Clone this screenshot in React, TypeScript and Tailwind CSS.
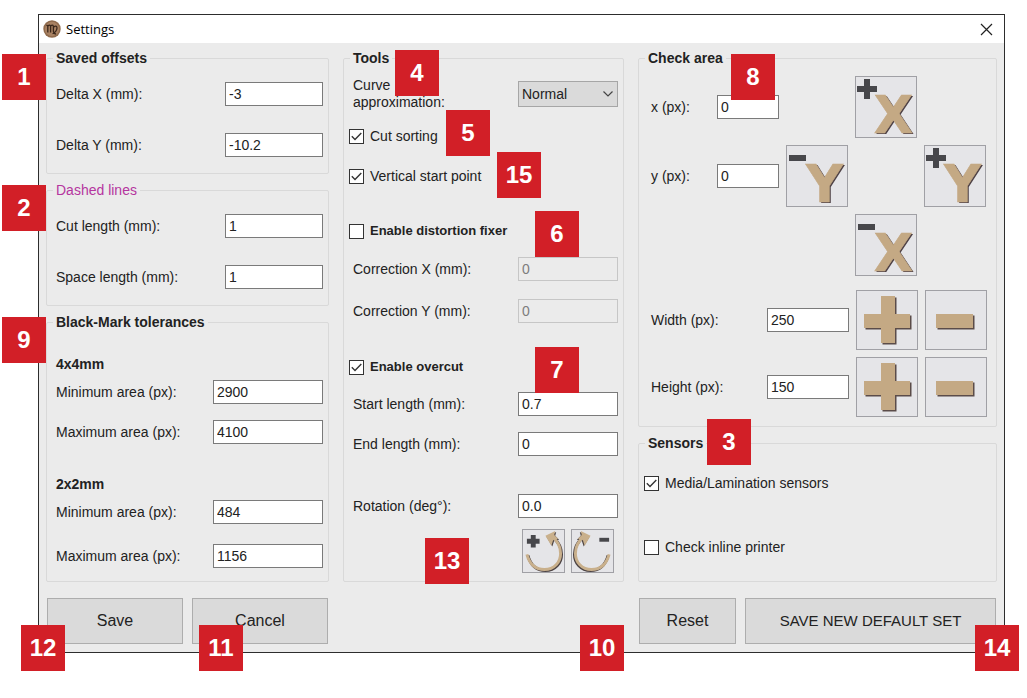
import { ReactNode, useId } from "react";
import clsx from "clsx";

// numbered red marker that sits over the dialog
function Marker({ n, className }: { n: number; className: string }) {
    return (
        <span
            className={clsx(
                "absolute z-10 flex h-[46px] w-11 items-center justify-center bg-[#d21f27] text-2xl font-bold text-white",
                className
            )}
        >
            {n}
        </span>
    );
}

type GroupProps = {
    title: string;
    legendClass?: string;
    className?: string;
    markers?: ReactNode;
    children: ReactNode;
};

function Group({ title, legendClass = "font-bold", className, markers, children }: GroupProps) {
    return (
        <div className={clsx("relative flex flex-col", className)}>
            {markers}
            <fieldset className="min-w-0 flex-1 rounded-xs border border-[#d9d9d9]">
                <legend className={clsx("ml-1.5 px-[3px] leading-4", legendClass)}>{title}</legend>
                {children}
            </fieldset>
        </div>
    );
}

const inputClass =
    "h-6 border border-[#7a7a7a] bg-white pl-[3px] text-[#222] outline-none disabled:border-[#c6c6c6] disabled:bg-[#ebebeb] disabled:text-[#7d7d7d]";

type FieldProps = {
    label: string;
    value: string;
    inputWidth: string;
    className?: string;
    disabled?: boolean;
};

function Field({ label, value, inputWidth, className, disabled }: FieldProps) {
    const id = useId();
    return (
        <div className={clsx("flex items-center justify-between pr-[5px] pl-[9px]", className)}>
            <label htmlFor={id}>{label}</label>
            <input
                id={id}
                type="text"
                defaultValue={value}
                disabled={disabled}
                className={clsx(inputClass, inputWidth)}
            />
        </div>
    );
}

type CheckProps = { label: string; checked?: boolean; className?: string };

function Check({ label, checked, className }: CheckProps) {
    return (
        <label className={clsx("flex h-4 items-center gap-1.5 pl-[5px]", className)}>
            <span className="grid">
                <input
                    type="checkbox"
                    defaultChecked={checked}
                    className="peer col-start-1 row-start-1 size-[15px] appearance-none border border-[#333] bg-white"
                />
                <svg
                    viewBox="0 0 15 15"
                    className="pointer-events-none invisible col-start-1 row-start-1 size-[15px] peer-checked:visible"
                    fill="none"
                    stroke="#333"
                    strokeWidth="1.4"
                >
                    <path d="M2.8 7.3 6 10.4 12.3 4" />
                </svg>
            </span>
            {label}
        </label>
    );
}

const toolButton = "flex items-center justify-center border border-[#a0a0a5] bg-[#e5e5e8]";

function AxisButton({ axis, sign, className }: { axis: string; sign: "+" | "-"; className: string }) {
    return (
        <button
            type="button"
            aria-label={`Move ${sign}${axis}`}
            className={clsx(toolButton, "h-[62px]", className)}
        >
            <svg
                width="60"
                height="60"
                viewBox="1 1 60 60"
                className="overflow-visible font-['DejaVu_Sans',sans-serif]"
            >
                <g fill="#47474b">
                    <rect x={sign === "+" ? 2 : 3} y="10" width={sign === "+" ? 20 : 17} height="6" />
                    {sign === "+" && <rect x="9" y="3" width="6" height="20" />}
                </g>
                <g fontSize="51" fontWeight="bold" textAnchor="middle">
                    <text x="40" y="58" fill="#4f4246">
                        {axis}
                    </text>
                    <text x="38.500" y="57" fill="#c4a984" stroke="#c4a984" strokeWidth=".6">
                        {axis}
                    </text>
                </g>
            </svg>
        </button>
    );
}

const PLUS = "M25 6h14v18h15v14H39v15H25V38H8V24h17z";
const MINUS = "M11 24h37v14H11z";

function SizeButton({ label, shape }: { label: string; shape: string }) {
    return (
        <button type="button" aria-label={label} className={clsx(toolButton, "h-[60px]")}>
            <svg width="60" height="58" viewBox="1 1 60 58">
                <path d={shape} fill="#5b4c49" transform="translate(1.5 1.5)" />
                <path d={shape} fill="#c4a984" />
            </svg>
        </button>
    );
}

function RotateArrow() {
    const head = "M24 7 34 2 33 6 37 10 32 11 30 17z";
    const arc = "M5 26C8 37 15 41.500 23 41.500C33 41.500 39.500 34 39.500 25C39.500 17 36 12 31 8";
    return (
        <>
            <g stroke="#4d4444" transform="translate(1 1)" fill="none">
                <path d={arc} strokeWidth="3" />
                <path d={head} fill="#4d4444" stroke="none" />
            </g>
            <path d={arc} stroke="#c9b08c" strokeWidth="3" fill="none" />
            <path d={head} fill="#c9b08c" />
        </>
    );
}

function RotateButton({ sign }: { sign: "+" | "-" }) {
    return (
        <button type="button" aria-label={`Rotate ${sign}`} className={clsx(toolButton, "h-11 w-[43px]")}>
            <svg width="41" height="42" viewBox="1 1 42 43">
                {sign === "+" ? (
                    <>
                        <RotateArrow />
                        <path d="M9 6h5v4h4v5h-4v4H9v-4H5v-5h4z" fill="#47474b" />
                    </>
                ) : (
                    <>
                        <g transform="translate(44 0) scale(-1 1)">
                            <RotateArrow />
                        </g>
                        <path d="M29 9h10v4H29z" fill="#47474b" />
                    </>
                )}
            </svg>
        </button>
    );
}

function AppIcon() {
    return (
        <svg width="18" height="18" viewBox="0 0 18 18" fill="none">
            <circle cx="9" cy="9" r="8.700" fill="#8f6a4c" />
            <circle cx="9" cy="9" r="7.200" fill="#a98263" />
            <path
                d="M3.500 5 4.800 6v6.500M4.800 6.200Q6.800 4.200 7.600 6.200v6.300M7.600 6.200Q9.600 4.200 10.400 6.200v5.300Q10.600 13.500 13 14.200M10.500 7.200Q13.800 4.800 14 8 13.800 11.500 9.600 13.800"
                stroke="#3a271b"
                strokeWidth="1.300"
            />
        </svg>
    );
}

const bigButton = "h-[46px] w-full border border-[#adadad] bg-[#dadada] text-[#222]";

export default function App() {
    return (
        <div className="min-h-screen bg-white pt-3.5 pr-[22px] pb-11 pl-[38px] font-['Liberation_Sans',Arial,sans-serif] text-sm text-[#222]">
            <main className="border border-[#2d2d2d] bg-[#ebebeb]">
                {/* title bar */}
                <header className="flex h-7 items-center gap-[5px] bg-white pr-[11px] pl-1">
                    <AppIcon />
                    <h1 className="flex-1 font-['Open_Sans','Noto_Sans',sans-serif] text-[13px] text-black">
                        Settings
                    </h1>
                    <button type="button" aria-label="Close">
                        <svg width="13" height="13" viewBox="0 0 13 13" stroke="#222" strokeWidth="1.200">
                            <path d="m1 1 11 11M12 1 1 12" />
                        </svg>
                    </button>
                </header>

                <div className="grid grid-cols-[283fr_281fr_359fr] gap-x-3.5 gap-y-4 px-[7px] pt-[7px] pb-2">
                    <div className="flex flex-col gap-2">
                        <Group title="Saved offsets" markers={<Marker n={1} className="top-1 -left-11" />}>
                            <Field label="Delta X (mm):" value="-3" inputWidth="w-[98px]" className="mt-4" />
                            <Field label="Delta Y (mm):" value="-10.2" inputWidth="w-[98px]" className="mt-[27px] mb-4" />
                        </Group>
                        <Group
                            title="Dashed lines"
                            legendClass="text-[#b5359f]"
                            markers={<Marker n={2} className="top-[3px] -left-11" />}
                        >
                            <Field label="Cut length (mm):" value="1" inputWidth="w-[98px]" className="mt-4" />
                            <Field label="Space length (mm):" value="1" inputWidth="w-[98px]" className="mt-[27px] mb-4" />
                        </Group>
                        <Group
                            title="Black-Mark tolerances"
                            className="flex-1"
                            markers={<Marker n={9} className="top-[3px] -left-11" />}
                        >
                            <h2 className="mt-[26px] mb-2 pl-[9px] leading-4 font-bold">4x4mm</h2>
                            <Field label="Minimum area (px):" value="2900" inputWidth="w-[110px]" />
                            <Field label="Maximum area (px):" value="4100" inputWidth="w-[110px]" className="mt-4" />
                            <h2 className="mt-8 mb-2 pl-[9px] leading-4 font-bold">2x2mm</h2>
                            <Field label="Minimum area (px):" value="484" inputWidth="w-[110px]" />
                            <Field label="Maximum area (px):" value="1156" inputWidth="w-[110px]" className="mt-5" />
                        </Group>
                    </div>

                    <Group
                        title="Tools"
                        markers={
                            <>
                                <Marker n={4} className="top-0 left-[52px]" />
                                <Marker n={5} className="top-[60px] left-[103px]" />
                                <Marker n={15} className="top-[102px] left-[154px]" />
                                <Marker n={6} className="top-[161px] left-48" />
                                <Marker n={7} className="top-[297px] left-48" />
                                <Marker n={13} className="top-[488px] left-[82px]" />
                            </>
                        }
                    >
                        <div className="mt-[11px] flex h-[34px] items-center justify-between pr-[5px] pl-[9px]">
                            <label htmlFor="curve" className="w-24 leading-[17px]">
                                Curve approximation:
                            </label>
                            <span className="grid items-center">
                                <select
                                    id="curve"
                                    defaultValue="Normal"
                                    className="col-start-1 row-start-1 h-[26px] w-[100px] appearance-none border border-[#a6a6a6] bg-[#dadada] pl-[3px]"
                                >
                                    <option>Normal</option>
                                </select>
                                <svg
                                    viewBox="0 0 10 6"
                                    className="pointer-events-none col-start-1 row-start-1 mr-[5px] h-1.5 w-2.5 justify-self-end"
                                    fill="none"
                                    stroke="#444"
                                    strokeWidth="1.200"
                                >
                                    <path d="m.5.5 4.500 4.500L9.500.5" />
                                </svg>
                            </span>
                        </div>
                        <Check label="Cut sorting" checked className="mt-[17px]" />
                        <Check label="Vertical start point" checked className="mt-6" />
                        <Check label="Enable distortion fixer" className="mt-[39px] text-[13px] font-bold" />
                        <Field label="Correction X (mm):" value="0" inputWidth="w-[100px]" className="mt-[18px]" disabled />
                        <Field label="Correction Y (mm):" value="0" inputWidth="w-[100px]" className="mt-[18px]" disabled />
                        <Check label="Enable overcut" checked className="mt-9 text-[13px] font-bold" />
                        <Field label="Start length (mm):" value="0.7" inputWidth="w-[100px]" className="mt-[17px]" />
                        <Field label="End length (mm):" value="0" inputWidth="w-[100px]" className="mt-4" />
                        <Field label="Rotation (deg°):" value="0.0" inputWidth="w-[100px]" className="mt-[38px]" />
                        <div className="mt-[11px] mb-2 flex justify-end gap-1.5 pr-[9px]">
                            <RotateButton sign="+" />
                            <RotateButton sign="-" />
                        </div>
                    </Group>

                    <div className="flex flex-col gap-2">
                        <Group title="Check area" markers={<Marker n={8} className="top-1 left-[93px]" />}>
                            <div className="mt-2.5 grid grid-cols-[1fr_62px_62px_62px_62px] items-center gap-[7px] pr-2.5 pl-3">
                                <label htmlFor="area-x">x (px):</label>
                                <input id="area-x" type="text" defaultValue="0" className={inputClass} />
                                <AxisButton axis="X" sign="+" className="col-start-4" />
                                <label htmlFor="area-y" className="col-start-1">
                                    y (px):
                                </label>
                                <input id="area-y" type="text" defaultValue="0" className={inputClass} />
                                <AxisButton axis="Y" sign="-" className="col-start-3" />
                                <AxisButton axis="Y" sign="+" className="col-start-5" />
                                <AxisButton axis="X" sign="-" className="col-start-4" />
                            </div>
                            <div className="mt-3.5 mb-[9px] grid grid-cols-[1fr_82px_62px_62px] items-center gap-[7px] pr-[9px] pl-3">
                                <label htmlFor="area-w">Width (px):</label>
                                <input id="area-w" type="text" defaultValue="250" className={inputClass} />
                                <SizeButton label="Increase width" shape={PLUS} />
                                <SizeButton label="Decrease width" shape={MINUS} />
                                <label htmlFor="area-h">Height (px):</label>
                                <input id="area-h" type="text" defaultValue="150" className={inputClass} />
                                <SizeButton label="Increase height" shape={PLUS} />
                                <SizeButton label="Decrease height" shape={MINUS} />
                            </div>
                        </Group>
                        <Group
                            title="Sensors"
                            className="flex-1"
                            markers={<Marker n={3} className="-top-4 left-[69px]" />}
                        >
                            <Check label="Media/Lamination sensors" checked className="mt-6" />
                            <Check label="Check inline printer" className="mt-12" />
                        </Group>
                    </div>

                    {/* bottom buttons share the columns above */}
                    <div className="flex gap-[9px] px-px">
                        <div className="relative flex-1">
                            <button type="button" className={clsx(bigButton, "text-base")}>
                                Save
                            </button>
                            <Marker n={12} className="top-[27px] -left-[26px]" />
                        </div>
                        <div className="relative flex-1">
                            <button type="button" className={clsx(bigButton, "text-base")}>
                                Cancel
                            </button>
                            <Marker n={11} className="top-[27px] left-[7px]" />
                        </div>
                    </div>
                    <div className="col-start-3 flex gap-[9px] px-px">
                        <div className="relative w-[97px]">
                            <button type="button" className={clsx(bigButton, "text-base")}>
                                Reset
                            </button>
                            <Marker n={10} className="top-[27px] -left-[59px]" />
                        </div>
                        <div className="relative flex-1">
                            <button type="button" className={clsx(bigButton, "text-[15px]")}>
                                SAVE NEW DEFAULT SET
                            </button>
                            <Marker n={14} className="top-[27px] -right-[23px]" />
                        </div>
                    </div>
                </div>
            </main>
        </div>
    );
}
